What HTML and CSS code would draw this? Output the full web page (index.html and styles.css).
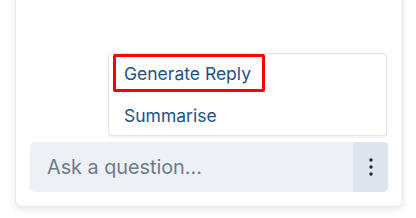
FILE: index.html
```html
<!DOCTYPE html>
<html>
<head>
<meta charset="utf-8">
<link rel="stylesheet" href="styles.css">
</head>
<body>
<div class="page">
  <div class="card">
    <div class="composer">
      <div class="menu">
        <div class="item focused">Generate Reply</div>
        <div class="item">Summarise</div>
      </div>
      <div class="input">
        <span class="placeholder">Ask a question...</span>
        <button class="more" aria-label="More">
          <svg width="6" height="18" viewBox="0 0 6 18"><circle cx="3" cy="2" r="1.7" fill="#1f2937"/><circle cx="3" cy="9" r="1.7" fill="#1f2937"/><circle cx="3" cy="16" r="1.7" fill="#1f2937"/></svg>
        </button>
      </div>
    </div>
  </div>
</div>
</body>
</html>
```
FILE: styles.css
```css
html, body {
  margin: 0;
  padding: 0;
  background: #ffffff;
  font-family: Inter, "Noto Sans", sans-serif;
}
.page {
  width: 416px;
  height: 218px;
  padding: 0 13px 0 15px;
  box-sizing: border-box;
  overflow: hidden;
}
.card {
  margin-top: -10px;
  height: 217px;
  box-sizing: border-box;
  background: #fff;
  border: 1px solid #e4e8ee;
  border-radius: 6px;
  box-shadow: 0 3px 6px rgba(30, 40, 60, 0.10);
  display: flex;
  flex-direction: column;
  justify-content: flex-end;
  padding: 0 14px 14px;
}
.composer {
  position: relative;
}
.menu {
  position: absolute;
  right: 1px;
  bottom: calc(100% + 6px);
  width: 279px;
  box-sizing: border-box;
  background: #fff;
  border: 1px solid #e1e5eb;
  border-radius: 4px;
  box-shadow: 0 1px 3px rgba(30, 40, 60, 0.08);
  padding: 0 4px 1px;
  display: flex;
  flex-direction: column;
  gap: 4px;
}
.item {
  height: 38px;
  box-sizing: border-box;
  border: 3px solid transparent;
  border-radius: 2px;
  padding: 0 11px 0 8px;
  display: flex;
  align-items: center;
  font-size: 17.5px;
  color: #1c5286;
  width: fit-content;
}
.item.focused {
  border-color: #ff0000;
}
.input {
  height: 50px;
  display: flex;
  align-items: stretch;
  background: #edf1f6;
  border-radius: 5px;
  overflow: hidden;
}
.placeholder {
  flex: 1;
  display: flex;
  align-items: center;
  padding-left: 17px;
  font-size: 19.8px;
  color: #6b7a8f;
}
.more {
  width: 35px;
  border: 0;
  padding: 0;
  background: #dfe5ee;
  display: flex;
  align-items: center;
  justify-content: center;
  cursor: pointer;
}
```
